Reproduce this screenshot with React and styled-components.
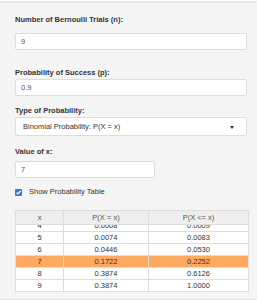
import React, { useLayoutEffect, useRef } from 'react';
import styled, { createGlobalStyle } from 'styled-components';

const rows = [
  ['0', '0.0000', '0.0000'],
  ['1', '0.0000', '0.0000'],
  ['2', '0.0000', '0.0000'],
  ['3', '0.0001', '0.0001'],
  ['4', '0.0008', '0.0009'],
  ['5', '0.0074', '0.0083'],
  ['6', '0.0446', '0.0530'],
  ['7', '0.1722', '0.2252'],
  ['8', '0.3874', '0.6126'],
  ['9', '0.3874', '1.0000'],
];

const GlobalStyle = createGlobalStyle`
  body {
    margin: 0;
    background: #fff;
    font-family: "Liberation Sans", Arial, sans-serif;
    color: #333;
  }
`;

const App = () => {
  const scrollRef = useRef(null);

  useLayoutEffect(() => {
    const el = scrollRef.current;
    if (el) el.scrollTop = el.scrollHeight;
  }, []);

  return (
    <>
      <GlobalStyle />
      <Well>
        <FormGroup $mb={18}>
          <Label $mb={8}>Number of Bernoulli Trials (n):</Label>
          <Input>9</Input>
        </FormGroup>
        <FormGroup $mb={10}>
          <Label $mb={1}>Probability of Success (p):</Label>
          <Input>0.9</Input>
        </FormGroup>
        <FormGroup $mb={11}>
          <Label $mb={1}>Type of Probability:</Label>
          <Select>
            <span>Binomial Probability: P(X = x)</span>
            <Caret />
          </Select>
        </FormGroup>
        <FormGroup $mb={9}>
          <Label $mb={4}>Value of x:</Label>
          <Input $width={140}>7</Input>
        </FormGroup>
        <CheckRow>
          <CheckBox>
            <svg width="7" height="7" viewBox="0 0 7 7">
              <path d="M1.5 3.6 L2.9 5 L5.6 2" fill="none" stroke="#fff" strokeWidth="1.2" />
            </svg>
          </CheckBox>
          Show Probability Table
        </CheckRow>
        <TableScroll ref={scrollRef}>
          <Table>
            <colgroup>
              <col style={{ width: 48 }} />
              <col style={{ width: 85 }} />
              <col />
            </colgroup>
            <thead>
              <tr>
                <Th>x</Th>
                <Th>P(X = x)</Th>
                <Th>P(X &lt;= x)</Th>
              </tr>
            </thead>
            <tbody>
              {rows.map((r) => (
                <Tr key={r[0]} $active={r[0] === '7'}>
                  {r.map((c, i) => (
                    <Td key={i}>{c}</Td>
                  ))}
                </Tr>
              ))}
            </tbody>
          </Table>
        </TableScroll>
      </Well>
    </>
  );
};

const Well = styled.div`
  margin: 1px -1px 0 -1px;
  height: 299px;
  box-sizing: border-box;
  padding: 13px 10px 0 15px;
  background: #f5f5f5;
  border: 1px solid #e3e3e3;
  box-shadow: inset 0 1px 1px rgba(0, 0, 0, 0.05);
`;

const FormGroup = styled.div`
  margin-bottom: ${(p) => p.$mb}px;
`;

const Label = styled.div`
  font-size: 7.5px;
  line-height: 10px;
  font-weight: bold;
  color: #333;
  margin-bottom: ${(p) => p.$mb}px;
`;

const Input = styled.div`
  box-sizing: border-box;
  width: ${(p) => (p.$width ? `${p.$width}px` : '100%')};
  height: 17px;
  padding: 0 5px;
  display: flex;
  align-items: center;
  background: #fff;
  border: 1px solid #ddd;
  border-radius: 2px;
  font-size: 7.5px;
  color: #555;
`;

const Select = styled(Input)`
  height: 19px;
  padding: 0 12px 0 7px;
  justify-content: space-between;
  color: #333;
`;

const Caret = styled.span`
  width: 0;
  height: 0;
  border-left: 2.5px solid transparent;
  border-right: 2.5px solid transparent;
  border-top: 3px solid #333;
  margin-top: 1px;
`;

const CheckRow = styled.label`
  display: flex;
  align-items: center;
  gap: 7px;
  margin-bottom: 13px;
  font-size: 7.5px;
  line-height: 10px;
  color: #333;
`;

const CheckBox = styled.span`
  width: 7px;
  height: 7px;
  border-radius: 1px;
  background: #3b7bc4;
  display: flex;
`;

const TableScroll = styled.div`
  width: 234px;
  height: 82px;
  overflow-y: scroll;
  background: #fff;

  &::-webkit-scrollbar {
    width: 9px;
  }
  &::-webkit-scrollbar-track {
    background: #f1f1f1;
  }
  &::-webkit-scrollbar-thumb {
    background: #c1c1c1;
  }
  &::-webkit-scrollbar-button:single-button {
    display: block;
    height: 8px;
    background-color: #f1f1f1;
    background-repeat: no-repeat;
    background-position: center;
    background-size: 4px 2px;
  }
  &::-webkit-scrollbar-button:single-button:vertical:decrement {
    background-image: conic-gradient(from 135deg at 50% 0, #777 90deg, transparent 0);
  }
  &::-webkit-scrollbar-button:single-button:vertical:increment {
    background-image: conic-gradient(from -45deg at 50% 100%, #aaa 90deg, transparent 0);
  }
`;

const Table = styled.table`
  width: 100%;
  table-layout: fixed;
  border-collapse: collapse;
  font-size: 7.5px;
  text-align: center;
  border-left: 1px solid #ddd;
`;

const Th = styled.th`
  position: sticky;
  top: 0;
  height: 15px;
  padding: 0;
  font-weight: normal;
  color: #555;
  background: #eee;
  border-right: 1px solid #ddd;
  box-shadow: inset 0 1px 0 #ddd, inset 0 -1px 0 #ddd;
`;

const Tr = styled.tr`
  background: ${(p) => (p.$active ? '#ffa860' : '#fff')};
`;

const Td = styled.td`
  height: 11px;
  padding: 0;
  line-height: 11px;
  color: #333;
  border-right: 1px solid #ddd;
  border-bottom: 1px solid #ddd;
`;

export default App;
